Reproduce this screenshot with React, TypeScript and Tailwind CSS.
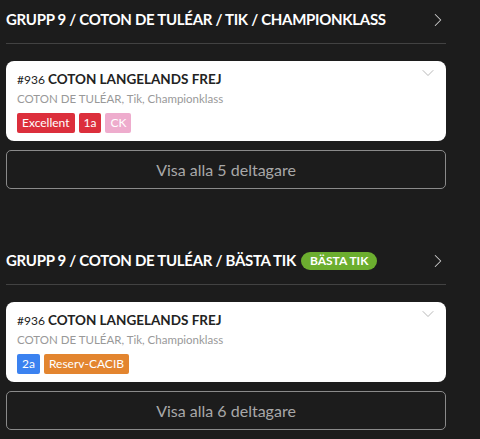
import { ChevronRight, ChevronDown } from 'lucide-react'

type Badge = { label: string; cls: string }

const groups = [
  {
    title: 'GRUPP 9 / COTON DE TULÉAR / TIK / CHAMPIONKLASS',
    tag: null as string | null,
    badges: [
      { label: 'Excellent', cls: 'bg-[#dc2f3c]' },
      { label: '1a', cls: 'bg-[#dc2f3c]' },
      { label: 'CK', cls: 'bg-[#eeaccd]' },
    ] as Badge[],
    count: 5,
  },
  {
    title: 'GRUPP 9 / COTON DE TULÉAR / BÄSTA TIK',
    tag: 'BÄSTA TIK',
    badges: [
      { label: '2a', cls: 'bg-[#3b82f0]' },
      { label: 'Reserv-CACIB', cls: 'bg-[#e3852f]' },
    ] as Badge[],
    count: 6,
  },
]

function Group({ g }: { g: (typeof groups)[number] }) {
  return (
    <section className="w-[440px]">
      <div className="flex items-center h-[44px] pb-[4px] border-b border-[#424242]">
        <h2 className="flex-1 flex items-center gap-[5px] text-white font-bold text-[15px] tracking-[-0.3px] whitespace-nowrap">
          {g.title}
          {g.tag && (
            <span className="rounded-full bg-[#6cae2f] text-white text-[12px] font-bold tracking-normal px-[9px] h-[18px] leading-[18px]">
              {g.tag}
            </span>
          )}
        </h2>
        <ChevronRight className="w-[22px] h-[22px] text-[#cfcfcf] -mr-[3px]" strokeWidth={1.1} />
      </div>
      <div className="mt-[17px] bg-white rounded-[8px] px-[11px] pt-[7px] pb-[8px] relative">
        <ChevronDown className="absolute right-[8px] top-[2px] w-[20px] h-[20px] text-[#aaa]" strokeWidth={1} />
        <div className="text-[#222] leading-[20px]">
          <span className="text-[12px]">#936 </span>
          <span className="text-[13.5px] font-bold">COTON LANGELANDS FREJ</span>
        </div>
        <div className="text-[11.5px] text-[#999] leading-[18px]">COTON DE TULÉAR, Tik, Championklass</div>
        <div className="flex gap-[4px] mt-[5px]">
          {g.badges.map((b) => (
            <span key={b.label} className={`${b.cls} text-white text-[12px] h-[20px] leading-[20px] px-[5px] rounded-[2px]`}>
              {b.label}
            </span>
          ))}
        </div>
      </div>
      <button className="mt-[9px] w-full h-[39px] border border-[#8a8a8a] rounded-[5px] text-[#a8a8a8] text-[16px]">
        Visa alla {g.count} deltagare
      </button>
    </section>
  )
}

export default function App() {
  return (
    <main className="min-h-[439px] bg-[#1c1c1c] pl-[6px] font-['Lato',sans-serif]">
      <div className="flex flex-col gap-[52px]">
        {groups.map((g) => (
          <Group key={g.title} g={g} />
        ))}
      </div>
    </main>
  )
}
